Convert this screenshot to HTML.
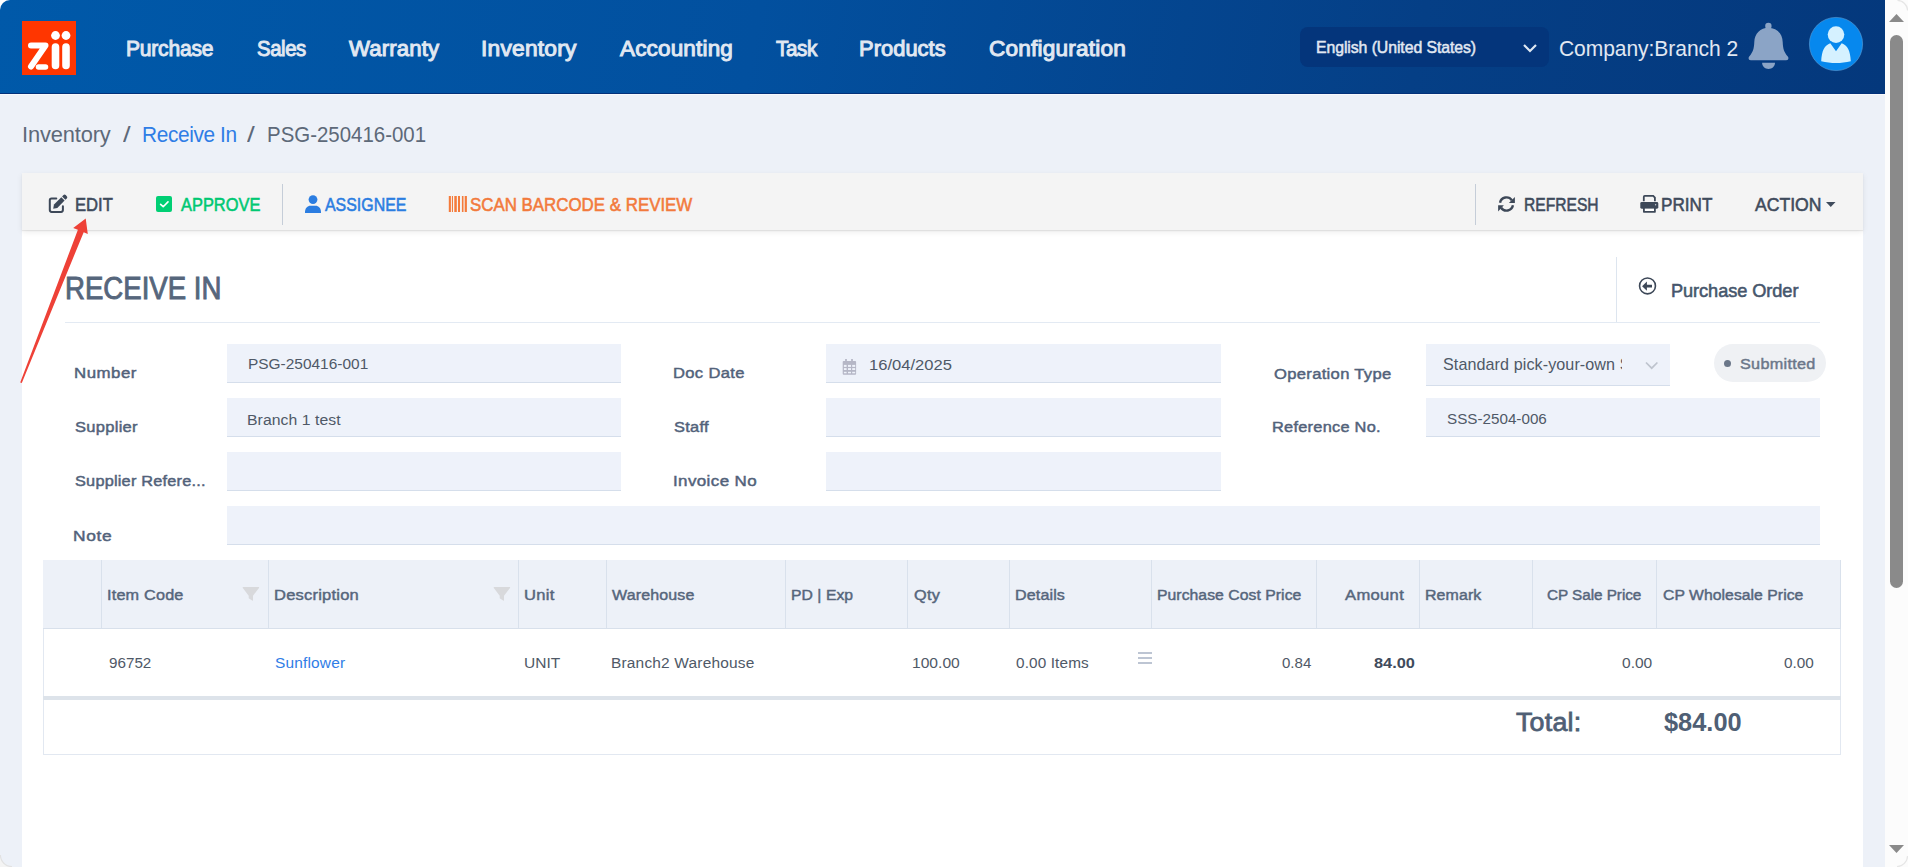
<!DOCTYPE html>
<html><head><meta charset="utf-8"><title>Receive In</title>
<style>
html,body{margin:0;padding:0}
body{width:1908px;height:867px;overflow:hidden;position:relative;background:#ffffff;font-family:"Liberation Sans",sans-serif}
.a{position:absolute;box-sizing:border-box}
.t{position:absolute;line-height:0;white-space:nowrap;font-family:"Liberation Sans",sans-serif}
svg{position:absolute;overflow:visible}
.inp{position:absolute;box-sizing:border-box;background:#eef2fa;border-bottom:1px solid #d5deeb}
.vd{position:absolute;top:560px;width:1px;height:68px;background:#d9e1ec}
</style></head><body>
<div class="a" style="left:0;top:94px;width:1885px;height:773px;background:#edf1f8"></div>
<div class="a" style="left:0;top:0;width:1885px;height:94px;border-top-left-radius:10px;background:linear-gradient(100deg,#0059a9 0%,#02509f 40%,#053f86 75%,#04387c 100%)"></div>
<div class="a" style="left:0;top:93px;width:1885px;height:1px;background:#03317a"></div>
<div class="a" style="left:0;top:94px;width:1885px;height:1px;background:#f7f9fc"></div>
<!-- logo -->
<svg style="left:0;top:0" width="100" height="94" viewBox="0 0 100 94">
 <rect x="22" y="21" width="54" height="54" fill="#ff3600"/>
 <path d="M31 45.5 H45.5 L31 66.5" stroke="#fff" stroke-width="6" stroke-linecap="round" stroke-linejoin="round" fill="none"/>
 <path d="M38.5 67 H45.5" stroke="#fff" stroke-width="5.5" stroke-linecap="round" fill="none"/>
 <path d="M55.5 47 V65.5 M66 47 V65.5" stroke="#fff" stroke-width="7.6" stroke-linecap="round" fill="none"/>
 <circle cx="55.5" cy="35.5" r="4.4" fill="#fff"/><circle cx="66" cy="35.5" r="4.4" fill="#fff"/>
</svg>
<!-- language select -->
<div class="a" style="left:1300px;top:27px;width:249px;height:40px;border-radius:8px;background:#04357b"></div>
<svg style="left:0;top:0" width="1" height="1"><polyline points="1524,45 1530,51 1536,45" stroke="#dfe8f2" stroke-width="2.2" fill="none"/></svg>
<!-- bell -->
<svg style="left:1748px;top:23px" width="41" height="46" viewBox="0 0 41 46">
 <circle cx="20.4" cy="2.9" r="3.2" fill="#8ba4c6"/>
 <path d="M20.5 4.8 C12.5 4.8 6.5 10.5 6.3 19 C6 26 5 29 1.2 33.6 C0 35.2 0.6 37.3 2.8 37.3 L38.2 37.3 C40.4 37.3 41 35.2 39.8 33.6 C36 29 35 26 34.7 19 C34.5 10.5 28.5 4.8 20.5 4.8 Z" fill="#8ba4c6"/>
 <path d="M14.1 39.8 H27 C27 43.5 24 46 20.5 46 C17 46 14.1 43.5 14.1 39.8 Z" fill="#8ba4c6"/>
</svg>
<!-- avatar -->
<svg style="left:1809px;top:17px" width="54" height="54" viewBox="0 0 54 54">
 <circle cx="27" cy="27" r="26.6" fill="#0688ee" stroke="#5a9fd8" stroke-width="0.6"/>
 <circle cx="27" cy="17.6" r="8.3" fill="#d5f1ff"/>
 <path d="M21.3 26.3 L27 34.3 L32.7 26.3 C38.5 28.5 41.2 33.5 41.8 44.2 C32 46.6 22 46.6 12.2 44.2 C12.8 33.5 15.5 28.5 21.3 26.3 Z" fill="#d5f1ff"/>
</svg>
<!-- scrollbar -->
<div class="a" style="left:1885px;top:0;width:23px;height:867px;background:#fcfcfc"></div>
<svg style="left:0;top:0" width="1" height="1">
 <polygon points="1889,22 1904,22 1896.5,14" fill="#8a8a8a"/>
 <polygon points="1889,845 1904,845 1896.5,853" fill="#8a8a8a"/>
</svg>
<div class="a" style="left:1890px;top:35px;width:13px;height:553px;border-radius:6.5px;background:#8a8a8a"></div>
<svg style="left:0;top:0" width="1" height="1">
 <path d="M1897.5 0.4 A10.5 10.5 0 0 1 1907.6 10.5" stroke="#e6e6e6" stroke-width="1.3" fill="none"/>
 <path d="M1907.6 856 A11 11 0 0 1 1897 866.6" stroke="#e6e6e6" stroke-width="1.3" fill="none"/>
</svg>
<svg style="left:0;top:0" width="1" height="1">
 <path d="M0 855 A12 12 0 0 0 12 867 L0 867 Z" fill="#f4f4f4"/>
 <path d="M0.4 855 A11.6 11.6 0 0 0 12 866.6" stroke="#e2e2e2" stroke-width="1.2" fill="none"/>
</svg>
<!-- toolbar -->
<div class="a" style="left:22px;top:230px;width:1841px;height:637px;background:#ffffff"></div>
<div class="a" style="left:22px;top:173px;width:1841px;height:57px;background:#f4f4f4;box-shadow:0 1px 1px rgba(0,0,0,0.07),0 2px 6px rgba(0,0,0,0.08)"></div>
<div class="a" style="left:282px;top:184px;width:1px;height:41px;background:#c5cdd8"></div>
<div class="a" style="left:1475px;top:184px;width:1px;height:41px;background:#c5cdd8"></div>
<!-- edit icon -->
<svg style="left:0;top:0" width="1" height="1">
 <path d="M56.3 198.5 H51.6 Q49.8 198.5 49.8 200.3 V210.1 Q49.8 211.9 51.6 211.9 H61.1 Q62.9 211.9 62.9 210.1 V206.2" stroke="#3d4858" stroke-width="2" fill="none" stroke-linecap="round"/>
 <path d="M53.2 208.8 L54 204.6 L61.3 197.3 L64.6 200.6 L57.3 207.9 Z" fill="#3d4858"/>
 <path d="M62.1 196.5 L63.5 195.1 Q64.6 194 65.7 195.1 L66.8 196.2 Q67.9 197.3 66.8 198.4 L65.4 199.8 Z" fill="#3d4858"/>
</svg>
<!-- approve checkbox -->
<div class="a" style="left:156px;top:196px;width:16px;height:16px;border-radius:2px;background:#00cf74"></div>
<svg style="left:0;top:0" width="1" height="1"><polyline points="160.6,204.3 163.2,206.7 168,201.9" stroke="#fff" stroke-width="1.6" fill="none" stroke-linecap="round" stroke-linejoin="round"/></svg>
<!-- assignee icon -->
<svg style="left:305px;top:195px" width="16" height="18" viewBox="0 0 16 18">
 <circle cx="8" cy="4.6" r="4.4" fill="#2b7de1"/>
 <path d="M0 17.3 C0 13 2.5 10.8 5.5 10.8 L10.5 10.8 C13.5 10.8 16 13 16 17.3 L16 18 L0 18 Z" fill="#2b7de1"/>
</svg>
<!-- barcode icon -->
<svg style="left:0;top:0" width="1" height="1">
 <rect x="448.8" y="196" width="2.1" height="16" fill="#f47b3b"/>
 <rect x="451.9" y="196" width="1.1" height="16" fill="#f47b3b"/>
 <rect x="454.3" y="196" width="2.5" height="16" fill="#f47b3b"/>
 <rect x="458" y="196" width="2" height="16" fill="#f47b3b"/>
 <rect x="461.9" y="196" width="1.6" height="16" fill="#f47b3b"/>
 <rect x="464.7" y="196" width="2.2" height="16" fill="#f47b3b"/>
</svg>
<!-- refresh icon -->
<svg style="left:1497px;top:195px" width="19" height="18" viewBox="0 0 19 18">
 <path d="M3.04 7.63 A6.6 6.6 0 0 1 14.9 5.2" stroke="#3d4858" stroke-width="2.4" fill="none"/>
 <path d="M11.9 8 H17.9 V2 Z" fill="#3d4858"/>
 <path d="M15.96 10.37 A6.6 6.6 0 0 1 4.1 12.8" stroke="#3d4858" stroke-width="2.4" fill="none"/>
 <path d="M1.1 10.2 H6.9 L1.1 16.6 Z" fill="#3d4858"/>
</svg>
<!-- print icon -->
<svg style="left:0;top:0" width="1" height="1">
 <path d="M1643.8 201.2 V196.9 Q1643.8 195.9 1644.8 195.9 H1653.2 L1654.9 197.6 V201.2" stroke="#3d4858" stroke-width="1.8" fill="none"/>
 <rect x="1640.3" y="202" width="18" height="6.7" rx="1.4" fill="#3d4858"/>
 <circle cx="1655.6" cy="204.7" r="0.7" fill="#c8ccd2"/>
 <rect x="1643" y="206.8" width="12.8" height="6" rx="0.8" fill="#3d4858"/>
 <rect x="1644.8" y="208.6" width="9.2" height="2.4" fill="#ffffff"/>
</svg>
<svg style="left:0;top:0" width="1" height="1"><polygon points="1826,202 1835.5,202 1830.75,207" fill="#3f4b5c"/></svg>
<!-- title area -->
<div class="a" style="left:65px;top:322px;width:1755px;height:1px;background:#e3eaf3"></div>
<div class="a" style="left:1616px;top:257px;width:1px;height:65px;background:#dde5ef"></div>
<svg style="left:0;top:0" width="1" height="1">
 <circle cx="1647.5" cy="285.9" r="7.95" stroke="#3d4858" stroke-width="1.6" fill="none"/>
 <path d="M1642.1 286.15 L1646.9 281.5 V284.8 H1652 V287.5 H1646.9 V290.8 Z" fill="#3d4858"/>
</svg>
<!-- inputs -->
<div class="inp" style="left:227px;top:344px;width:394px;height:39px"></div>
<div class="inp" style="left:227px;top:398px;width:394px;height:39px"></div>
<div class="inp" style="left:227px;top:452px;width:394px;height:39px"></div>
<div class="inp" style="left:227px;top:506px;width:1593px;height:39px"></div>
<div class="inp" style="left:826px;top:344px;width:395px;height:39px"></div>
<div class="inp" style="left:826px;top:398px;width:395px;height:39px"></div>
<div class="inp" style="left:826px;top:452px;width:395px;height:39px"></div>
<div class="inp" style="left:1426px;top:344px;width:244px;height:42px"></div>
<div class="inp" style="left:1426px;top:398px;width:394px;height:39px"></div>
<!-- calendar icon -->
<svg style="left:0;top:0" width="1" height="1">
 <rect x="842.7" y="361" width="13.4" height="13.7" rx="1" fill="#b5b7c6"/>
 <rect x="845.1" y="359" width="1.8" height="2.5" fill="#b5b7c6"/><rect x="851.1" y="359" width="1.8" height="2.5" fill="#b5b7c6"/>
 <rect x="843.9" y="364.9" width="2.7" height="2" fill="#eef2fa"/><rect x="843.9" y="368.1" width="2.7" height="1.9" fill="#eef2fa"/><rect x="843.9" y="371.8" width="2.7" height="1.5" fill="#eef2fa"/><rect x="848" y="364.9" width="3" height="2" fill="#eef2fa"/><rect x="848" y="368.1" width="3" height="1.9" fill="#eef2fa"/><rect x="848" y="371.8" width="3" height="1.5" fill="#eef2fa"/><rect x="852.2" y="364.9" width="3" height="2" fill="#eef2fa"/><rect x="852.2" y="368.1" width="3" height="1.9" fill="#eef2fa"/><rect x="852.2" y="371.8" width="3" height="1.5" fill="#eef2fa"/>
</svg>
<svg style="left:0;top:0" width="1" height="1"><polyline points="1646,362.5 1651.7,368.2 1657.4,362.5" stroke="#bec4ce" stroke-width="1.7" fill="none"/></svg>
<!-- submitted pill -->
<div class="a" style="left:1714px;top:344px;width:112px;height:38px;border-radius:19px;background:#eff1f4"></div>
<div class="a" style="left:1724px;top:360px;width:7px;height:7px;border-radius:50%;background:#6b7789"></div>
<!-- table -->
<div class="a" style="left:43px;top:560px;width:1798px;height:195px;border:1px solid #e2e8f1;border-top:none;background:#fff"></div>
<div class="a" style="left:43px;top:560px;width:1798px;height:69px;background:#edf1f8;border-bottom:1px solid #d8e0eb;border-right:1px solid #d9e1ec"></div>
<div class="vd" style="left:101px"></div>
<div class="vd" style="left:268px"></div>
<div class="vd" style="left:518px"></div>
<div class="vd" style="left:606px"></div>
<div class="vd" style="left:785px"></div>
<div class="vd" style="left:907px"></div>
<div class="vd" style="left:1009px"></div>
<div class="vd" style="left:1151px"></div>
<div class="vd" style="left:1316px"></div>
<div class="vd" style="left:1419px"></div>
<div class="vd" style="left:1532px"></div>
<div class="vd" style="left:1656px"></div>
<div class="a" style="left:43px;top:696px;width:1798px;height:4px;background:#dde3ea"></div>
<!-- filter icons -->
<svg style="left:0;top:0" width="1" height="1">
 <path transform="translate(0,0)" d="M242.8 587 H259 Q259.3 587.5 258.8 588.2 L253 595.8 V600.6 Q253 601 252.6 600.8 L249 598.6 Q248.7 598.4 248.7 598 V595.8 L243 588.2 Q242.5 587.5 242.8 587 Z" fill="#d8d9dc"/>
 <path transform="translate(251,0)" d="M242.8 587 H259 Q259.3 587.5 258.8 588.2 L253 595.8 V600.6 Q253 601 252.6 600.8 L249 598.6 Q248.7 598.4 248.7 598 V595.8 L243 588.2 Q242.5 587.5 242.8 587 Z" fill="#d8d9dc"/>
</svg>
<!-- hamburger -->
<svg style="left:0;top:0" width="1" height="1">
 <path d="M1138 652.9 H1152 M1138 657.9 H1152 M1138 662.9 H1152" stroke="#a8b3c5" stroke-width="1.5"/>
</svg>
<!-- red annotation arrow -->
<svg style="left:0;top:0" width="1" height="1">
 <path d="M20.2 382.4 L77.9 229.8 L73.2 228.1 L85.7 218.5 L87.8 233.9 L83.7 232.2 L21.8 382.9 Z" fill="#ee4137"/>
</svg>

<span class=t style="left:126.33px;top:49px;font-size:21.75px;font-weight:400;color:#e1e8f2;letter-spacing:-0.199px;-webkit-text-stroke:0.98px #e1e8f2;transform:scaleX(0.9654);transform-origin:0 0;">Purchase</span>
<span class=t style="left:257.00px;top:49px;font-size:21.75px;font-weight:400;color:#e1e8f2;letter-spacing:-0.412px;-webkit-text-stroke:0.98px #e1e8f2;transform:scaleX(0.9341);transform-origin:0 0;">Sales</span>
<span class=t style="left:349.40px;top:49px;font-size:21.75px;font-weight:400;color:#e1e8f2;letter-spacing:0.112px;-webkit-text-stroke:0.98px #e1e8f2;transform:scaleX(1.0213);transform-origin:0 0;">Warranty</span>
<span class=t style="left:481.31px;top:49px;font-size:21.75px;font-weight:400;color:#e1e8f2;letter-spacing:0.208px;-webkit-text-stroke:0.98px #e1e8f2;transform:scaleX(1.0464);transform-origin:0 0;">Inventory</span>
<span class=t style="left:619.80px;top:49px;font-size:21.75px;font-weight:400;color:#e1e8f2;letter-spacing:0.167px;-webkit-text-stroke:0.98px #e1e8f2;transform:scaleX(1.0341);transform-origin:0 0;">Accounting</span>
<span class=t style="left:775.50px;top:49px;font-size:21.75px;font-weight:400;color:#e1e8f2;letter-spacing:-0.353px;-webkit-text-stroke:0.98px #e1e8f2;transform:scaleX(0.9478);transform-origin:0 0;">Task</span>
<span class=t style="left:859.39px;top:49px;font-size:21.75px;font-weight:400;color:#e1e8f2;letter-spacing:0.036px;-webkit-text-stroke:0.98px #e1e8f2;transform:scaleX(1.0069);transform-origin:0 0;">Products</span>
<span class=t style="left:988.96px;top:49px;font-size:21.75px;font-weight:400;color:#e1e8f2;letter-spacing:0.176px;-webkit-text-stroke:0.98px #e1e8f2;transform:scaleX(1.0403);transform-origin:0 0;">Configuration</span>
<span class=t style="left:1315.53px;top:47px;font-size:16.25px;font-weight:400;color:#e1e8f2;letter-spacing:-0.085px;-webkit-text-stroke:0.49px #e1e8f2;transform:scaleX(0.9742);transform-origin:0 0;">English (United States)</span>
<span class=t style="left:1558.81px;top:49px;font-size:21.25px;font-weight:400;color:#e1e8f2;letter-spacing:-0.056px;transform:scaleX(0.9892);transform-origin:0 0;">Company:Branch 2</span>
<span class=t style="left:21.56px;top:135px;font-size:22.5px;font-weight:400;color:#5d6979;letter-spacing:-0.147px;transform:scaleX(0.9709);transform-origin:0 0;">Inventory</span>
<span class=t style="left:122.50px;top:135px;font-size:22.5px;font-weight:400;color:#5d6979;letter-spacing:0.000px;transform:scaleX(1.2143);transform-origin:0 0;">/</span>
<span class=t style="left:141.77px;top:135px;font-size:22.5px;font-weight:400;color:#2f7de6;letter-spacing:-0.399px;transform:scaleX(0.9259);transform-origin:0 0;">Receive In</span>
<span class=t style="left:247.30px;top:135px;font-size:22.5px;font-weight:400;color:#5d6979;letter-spacing:0.000px;transform:scaleX(1.2429);transform-origin:0 0;">/</span>
<span class=t style="left:267.09px;top:135px;font-size:22.5px;font-weight:400;color:#5d6979;letter-spacing:0.000px;transform:scaleX(0.9084);transform-origin:0 0;">PSG-250416-001</span>
<span class=t style="left:74.94px;top:205px;font-size:19.25px;font-weight:400;color:#3f4b5c;letter-spacing:0.000px;-webkit-text-stroke:0.58px #3f4b5c;transform:scaleX(0.8633);transform-origin:0 0;">EDIT</span>
<span class=t style="left:180.90px;top:205px;font-size:19.25px;font-weight:400;color:#00c873;letter-spacing:0.000px;-webkit-text-stroke:0.58px #00c873;transform:scaleX(0.8527);transform-origin:0 0;">APPROVE</span>
<span class=t style="left:324.50px;top:205px;font-size:19.25px;font-weight:400;color:#2b7de1;letter-spacing:0.000px;-webkit-text-stroke:0.58px #2b7de1;transform:scaleX(0.8267);transform-origin:0 0;">ASSIGNEE</span>
<span class=t style="left:470.00px;top:205px;font-size:19.25px;font-weight:400;color:#f27a3c;letter-spacing:0.000px;-webkit-text-stroke:0.58px #f27a3c;transform:scaleX(0.8768);transform-origin:0 0;">SCAN BARCODE &amp; REVIEW</span>
<span class=t style="left:1523.79px;top:205px;font-size:19.25px;font-weight:400;color:#3f4b5c;letter-spacing:0.000px;-webkit-text-stroke:0.58px #3f4b5c;transform:scaleX(0.8115);transform-origin:0 0;">REFRESH</span>
<span class=t style="left:1661.11px;top:205px;font-size:19.25px;font-weight:400;color:#3f4b5c;letter-spacing:0.000px;-webkit-text-stroke:0.58px #3f4b5c;transform:scaleX(0.8896);transform-origin:0 0;">PRINT</span>
<span class=t style="left:1755.00px;top:205px;font-size:19.25px;font-weight:400;color:#3f4b5c;letter-spacing:0.000px;-webkit-text-stroke:0.58px #3f4b5c;transform:scaleX(0.9148);transform-origin:0 0;">ACTION</span>
<span class=t style="left:65.49px;top:288px;font-size:30.5px;font-weight:400;color:#56667c;letter-spacing:0.000px;-webkit-text-stroke:0.91px #56667c;transform:scaleX(0.9050);transform-origin:0 0;">RECEIVE IN</span>
<span class=t style="left:1670.92px;top:291px;font-size:18.5px;font-weight:400;color:#46566c;letter-spacing:-0.073px;-webkit-text-stroke:0.55px #46566c;transform:scaleX(0.9831);transform-origin:0 0;">Purchase Order</span>
<span class=t style="left:73.99px;top:373px;font-size:15.25px;font-weight:400;color:#52627a;letter-spacing:0.436px;-webkit-text-stroke:0.46px #52627a;transform:scaleX(1.1059);transform-origin:0 0;">Number</span>
<span class=t style="left:74.50px;top:427px;font-size:15.25px;font-weight:400;color:#52627a;letter-spacing:0.262px;-webkit-text-stroke:0.46px #52627a;transform:scaleX(1.0830);transform-origin:0 0;">Supplier</span>
<span class=t style="left:74.50px;top:481px;font-size:15.25px;font-weight:400;color:#52627a;letter-spacing:0.194px;-webkit-text-stroke:0.46px #52627a;transform:scaleX(1.0701);transform-origin:0 0;">Supplier Refere...</span>
<span class=t style="left:73.36px;top:536px;font-size:15.25px;font-weight:400;color:#52627a;letter-spacing:0.541px;-webkit-text-stroke:0.46px #52627a;transform:scaleX(1.1405);transform-origin:0 0;">Note</span>
<span class=t style="left:672.61px;top:373px;font-size:15.25px;font-weight:400;color:#52627a;letter-spacing:0.304px;-webkit-text-stroke:0.46px #52627a;transform:scaleX(1.0870);transform-origin:0 0;">Doc Date</span>
<span class=t style="left:673.70px;top:427px;font-size:15.25px;font-weight:400;color:#52627a;letter-spacing:0.240px;-webkit-text-stroke:0.46px #52627a;transform:scaleX(1.0758);transform-origin:0 0;">Staff</span>
<span class=t style="left:672.59px;top:481px;font-size:15.25px;font-weight:400;color:#52627a;letter-spacing:0.342px;-webkit-text-stroke:0.46px #52627a;transform:scaleX(1.1134);transform-origin:0 0;">Invoice No</span>
<span class=t style="left:1273.50px;top:374px;font-size:15.25px;font-weight:400;color:#52627a;letter-spacing:0.280px;-webkit-text-stroke:0.46px #52627a;transform:scaleX(1.0891);transform-origin:0 0;">Operation Type</span>
<span class=t style="left:1272.43px;top:427px;font-size:15.25px;font-weight:400;color:#52627a;letter-spacing:0.235px;-webkit-text-stroke:0.46px #52627a;transform:scaleX(1.0736);transform-origin:0 0;">Reference No.</span>
<span class=t style="left:248.20px;top:364px;font-size:15.5px;font-weight:400;color:#4f5967;letter-spacing:0.000px;transform:scaleX(0.9965);transform-origin:0 0;">PSG-250416-001</span>
<span class=t style="left:246.98px;top:420px;font-size:15.5px;font-weight:400;color:#4f5967;letter-spacing:0.056px;transform:scaleX(1.0175);transform-origin:0 0;">Branch 1 test</span>
<span class=t style="left:868.73px;top:365px;font-size:15.5px;font-weight:400;color:#4f5967;letter-spacing:0.000px;transform:scaleX(1.0690);transform-origin:0 0;">16/04/2025</span>
<div style="position:absolute;overflow:hidden;left:1426px;top:344px;width:196px;height:41px"><span class=t style="left:16.60px;top:21px;font-size:15.75px;font-weight:400;color:#4f5967;letter-spacing:0.080px;transform:scaleX(1.0242);transform-origin:0 0;">Standard pick-your-own S</span></div>
<span class=t style="left:1447.30px;top:419px;font-size:15.5px;font-weight:400;color:#4f5967;letter-spacing:0.000px;transform:scaleX(0.9816);transform-origin:0 0;">SSS-2504-006</span>
<span class=t style="left:1740.00px;top:364px;font-size:15.0px;font-weight:400;color:#6b7789;letter-spacing:0.271px;-webkit-text-stroke:0.45px #6b7789;transform:scaleX(1.0813);transform-origin:0 0;">Submitted</span>
<span class=t style="left:107.45px;top:595px;font-size:15.5px;font-weight:400;color:#56667c;letter-spacing:0.172px;-webkit-text-stroke:0.46px #56667c;transform:scaleX(1.0482);transform-origin:0 0;">Item Code</span>
<span class=t style="left:273.53px;top:595px;font-size:15.5px;font-weight:400;color:#56667c;letter-spacing:0.200px;-webkit-text-stroke:0.46px #56667c;transform:scaleX(1.0654);transform-origin:0 0;">Description</span>
<span class=t style="left:524.23px;top:595px;font-size:15.5px;font-weight:400;color:#56667c;letter-spacing:0.247px;-webkit-text-stroke:0.46px #56667c;transform:scaleX(1.0679);transform-origin:0 0;">Unit</span>
<span class=t style="left:612.00px;top:595px;font-size:15.5px;font-weight:400;color:#56667c;letter-spacing:0.132px;-webkit-text-stroke:0.46px #56667c;transform:scaleX(1.0326);transform-origin:0 0;">Warehouse</span>
<span class=t style="left:790.79px;top:595px;font-size:15.5px;font-weight:400;color:#56667c;letter-spacing:0.048px;-webkit-text-stroke:0.46px #56667c;transform:scaleX(1.0135);transform-origin:0 0;">PD | Exp</span>
<span class=t style="left:913.50px;top:595px;font-size:15.5px;font-weight:400;color:#56667c;letter-spacing:0.248px;-webkit-text-stroke:0.46px #56667c;transform:scaleX(1.0499);transform-origin:0 0;">Qty</span>
<span class=t style="left:1014.66px;top:595px;font-size:15.5px;font-weight:400;color:#56667c;letter-spacing:0.119px;-webkit-text-stroke:0.46px #56667c;transform:scaleX(1.0371);transform-origin:0 0;">Details</span>
<span class=t style="left:1156.68px;top:595px;font-size:15.5px;font-weight:400;color:#56667c;letter-spacing:0.050px;-webkit-text-stroke:0.46px #56667c;transform:scaleX(1.0152);transform-origin:0 0;">Purchase Cost Price</span>
<span class=t style="left:1344.50px;top:595px;font-size:15.5px;font-weight:400;color:#56667c;letter-spacing:0.302px;-webkit-text-stroke:0.46px #56667c;transform:scaleX(1.0697);transform-origin:0 0;">Amount</span>
<span class=t style="left:1424.97px;top:595px;font-size:15.5px;font-weight:400;color:#56667c;letter-spacing:0.117px;-webkit-text-stroke:0.46px #56667c;transform:scaleX(1.0261);transform-origin:0 0;">Remark</span>
<span class=t style="left:1546.80px;top:595px;font-size:15.5px;font-weight:400;color:#56667c;letter-spacing:-0.047px;-webkit-text-stroke:0.46px #56667c;transform:scaleX(0.9864);transform-origin:0 0;">CP Sale Price</span>
<span class=t style="left:1663.00px;top:595px;font-size:15.5px;font-weight:400;color:#56667c;letter-spacing:0.049px;-webkit-text-stroke:0.46px #56667c;transform:scaleX(1.0142);transform-origin:0 0;">CP Wholesale Price</span>
<span class=t style="left:108.50px;top:663px;font-size:14.75px;font-weight:400;color:#4f5967;letter-spacing:0.000px;transform:scaleX(1.0315);transform-origin:0 0;">96752</span>
<span class=t style="left:274.60px;top:663px;font-size:14.75px;font-weight:400;color:#2f7de6;letter-spacing:0.162px;transform:scaleX(1.0482);transform-origin:0 0;">Sunflower</span>
<span class=t style="left:524.25px;top:663px;font-size:14.75px;font-weight:400;color:#4f5967;letter-spacing:0.000px;transform:scaleX(1.0538);transform-origin:0 0;">UNIT</span>
<span class=t style="left:610.95px;top:663px;font-size:14.75px;font-weight:400;color:#4f5967;letter-spacing:0.166px;transform:scaleX(1.0490);transform-origin:0 0;">Branch2 Warehouse</span>
<span class=t style="left:912.44px;top:663px;font-size:14.75px;font-weight:400;color:#4f5967;letter-spacing:0.000px;transform:scaleX(1.0590);transform-origin:0 0;">100.00</span>
<span class=t style="left:1015.70px;top:663px;font-size:14.75px;font-weight:400;color:#4f5967;letter-spacing:0.122px;transform:scaleX(1.0389);transform-origin:0 0;">0.00 Items</span>
<span class=t style="left:1281.50px;top:663px;font-size:14.75px;font-weight:400;color:#4f5967;letter-spacing:0.000px;transform:scaleX(1.0209);transform-origin:0 0;">0.84</span>
<span class=t style="left:1374.00px;top:663px;font-size:14.75px;font-weight:700;color:#3f4b5c;letter-spacing:-0.000px;transform:scaleX(1.1088);transform-origin:0 0;">84.00</span>
<span class=t style="left:1622.00px;top:663px;font-size:14.75px;font-weight:400;color:#4f5967;letter-spacing:0.000px;transform:scaleX(1.0525);transform-origin:0 0;">0.00</span>
<span class=t style="left:1784.00px;top:663px;font-size:14.75px;font-weight:400;color:#4f5967;letter-spacing:-0.000px;transform:scaleX(1.0384);transform-origin:0 0;">0.00</span>
<span class=t style="left:1516.10px;top:722px;font-size:25.75px;font-weight:400;color:#4f5f75;letter-spacing:0.202px;-webkit-text-stroke:0.77px #4f5f75;transform:scaleX(1.0413);transform-origin:0 0;">Total:</span>
<span class=t style="left:1664.20px;top:722px;font-size:25.75px;font-weight:700;color:#4f5f75;letter-spacing:0.000px;transform:scaleX(0.9855);transform-origin:0 0;">$84.00</span>
</body></html>
